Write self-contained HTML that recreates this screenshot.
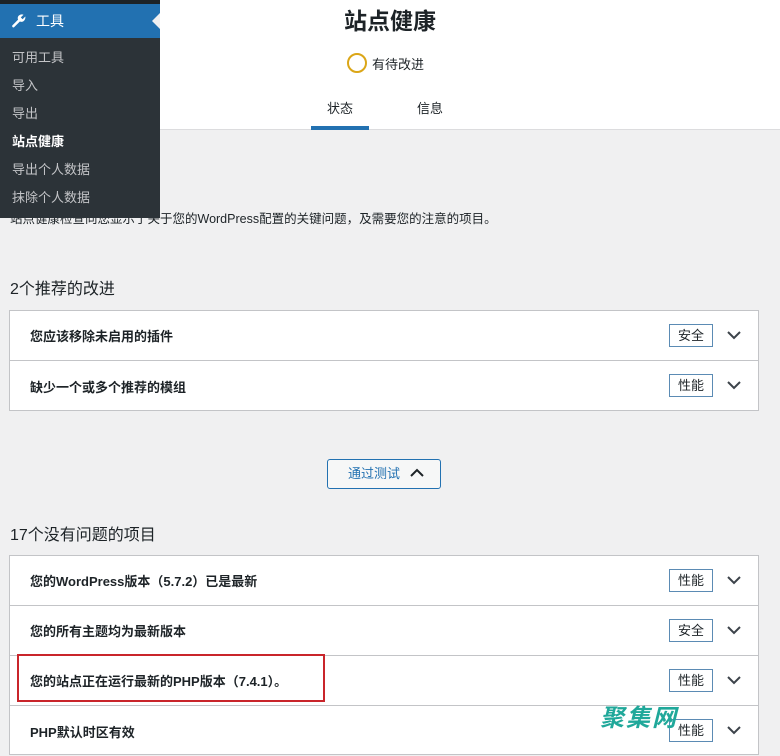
<!DOCTYPE html>
<html><head><meta charset="utf-8"><style>
*{box-sizing:border-box;margin:0;padding:0}
body{width:780px;height:737px;overflow:hidden;background:#f0f0f1;font-family:"Liberation Sans","Noto Sans CJK SC",sans-serif;color:#1d2327;position:relative;font-size:13px}
.hdr{position:absolute;left:0;top:0;width:780px;height:130px;background:#fff;border-bottom:1px solid #dcdcde}
.title{position:absolute;left:0;width:780px;top:2px;text-align:center;font-size:23px;font-weight:bold}
.status{position:absolute;left:347px;top:53px;font-size:13px;display:flex;align-items:center}
.status i{width:20px;height:20px;border:2px solid #dba617;border-radius:50%;margin-right:5px;display:inline-block}
.tab{position:absolute;top:98px;font-size:13px}
.tabline{position:absolute;left:311px;top:126px;width:58px;height:4px;background:#2271b1}
.side{position:absolute;left:0;top:0;width:160px;height:218px;background:#2c3338}
.side .top{height:4px;background:#1d2327}
.side .blue{height:34px;background:#2271b1;color:#fff;font-size:14px;display:flex;align-items:center;padding-left:10px}
.side .blue:after{content:"";position:absolute;left:152px;top:13px;border:8px solid transparent;border-right-color:#f0f0f1;border-left:0}
.side a{display:block;color:#c3c4c7;font-size:13px;height:28px;line-height:28px;padding-left:12px}
.side a.cur{color:#fff;font-weight:bold}
.desc{position:absolute;left:10px;top:208px;font-size:12.5px}
h2{position:absolute;left:10px;font-size:16px;font-weight:normal}
.box{position:absolute;left:9px;width:750px;background:#fff;border:1px solid #c3c4c7}
.row{height:50px;border-bottom:1px solid #c3c4c7;position:relative;display:flex;align-items:center;padding-left:20px;font-size:13px;font-weight:bold;color:#1d2327}
.row:last-child{border-bottom:0}
.badge{position:absolute;left:659px;top:13px;width:44px;height:23px;border:1px solid #5b8bb4;font-weight:normal;font-size:13px;text-align:center;line-height:21px}
.chev{position:absolute;left:716px;top:18px;width:16px;height:12px}
.btn{position:absolute;left:327px;top:459px;width:114px;height:30px;border:1px solid #2271b1;border-radius:3px;background:#f6f7f7;color:#2271b1;font-size:13px;line-height:28px;padding-left:20px}
</style></head><body>
<div class="hdr">
<div class="title">站点健康</div>
<div class="status"><i></i>有待改进</div>
<div class="tab" style="left:327px">状态</div>
<div class="tab" style="left:417px">信息</div>
<div class="tabline"></div>
</div>
<div class="desc">站点健康检查向您显示了关于您的WordPress配置的关键问题，及需要您的注意的项目。</div>
<div class="side">
<div class="top"></div>
<div class="blue"><svg width="18" height="18" viewBox="0 0 20 20" style="margin-right:8px"><path fill="#fff" d="M17 5l-3 3-2-2 3-3c-2-1-5 0-6 2-.6 1.3-.5 2.5 0 3.5L2.5 15a1.5 1.5 0 002 2l6.5-6.5c1 .5 2.300.6 3.5 0 2-1 3-4 2.5-5.5z"/></svg>工具</div>
<div style="height:6px"></div>
<a>可用工具</a><a>导入</a><a>导出</a><a class="cur">站点健康</a><a>导出个人数据</a><a>抹除个人数据</a>
</div>
<h2 style="top:275px">2个推荐的改进</h2>
<div class="box" style="top:310px;height:101px">
<div class="row">您应该移除未启用的插件<span class="badge">安全</span><svg class="chev" viewBox="0 0 16 12"><path d="M2 3l6 6 6-6" fill="none" stroke="#3c434a" stroke-width="2"/></svg></div>
<div class="row">缺少一个或多个推荐的模组<span class="badge">性能</span><svg class="chev" viewBox="0 0 16 12"><path d="M2 3l6 6 6-6" fill="none" stroke="#3c434a" stroke-width="2"/></svg></div>
</div>
<div class="btn">通过测试 <svg width="16" height="10" viewBox="0 0 16 10" style="margin-left:5px"><path d="M2 8l6-6 6 6" fill="none" stroke="#1d2327" stroke-width="2"/></svg></div>
<h2 style="top:521px">17个没有问题的项目</h2>
<div class="box" style="top:555px;height:200px">
<div class="row">您的WordPress版本（5.7.2）已是最新<span class="badge">性能</span><svg class="chev" viewBox="0 0 16 12"><path d="M2 3l6 6 6-6" fill="none" stroke="#3c434a" stroke-width="2"/></svg></div>
<div class="row">您的所有主题均为最新版本<span class="badge">安全</span><svg class="chev" viewBox="0 0 16 12"><path d="M2 3l6 6 6-6" fill="none" stroke="#3c434a" stroke-width="2"/></svg></div>
<div class="row">您的站点正在运行最新的PHP版本（7.4.1）。<span class="badge">性能</span><svg class="chev" viewBox="0 0 16 12"><path d="M2 3l6 6 6-6" fill="none" stroke="#3c434a" stroke-width="2"/></svg></div>
<div class="row">PHP默认时区有效<span class="badge">性能</span><svg class="chev" viewBox="0 0 16 12"><path d="M2 3l6 6 6-6" fill="none" stroke="#3c434a" stroke-width="2"/></svg></div>
</div>
<div style="position:absolute;left:17px;top:654px;width:308px;height:48px;border:2px solid #c9252b"></div>
<div style="position:absolute;left:600px;top:698px;font-size:24px;font-weight:bold;color:#20a89a;font-style:italic;letter-spacing:2px">聚集网</div>
</body></html>
